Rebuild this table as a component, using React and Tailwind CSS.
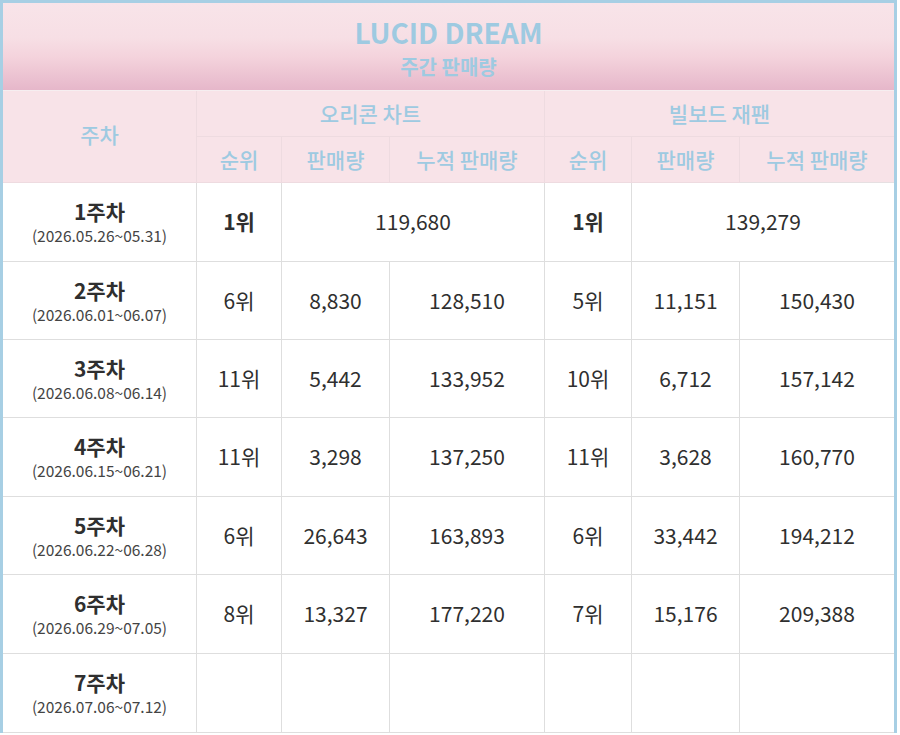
import React from "react";

const font = { fontFamily: '"Noto Sans CJK KR", "Noto Sans", sans-serif' };

const rows = [
  { w: "1주차", d: "(2026.05.26~05.31)", merged: true, o: ["1위", "119,680"], b: ["1위", "139,279"] },
  { w: "2주차", d: "(2026.06.01~06.07)", o: ["6위", "8,830", "128,510"], b: ["5위", "11,151", "150,430"] },
  { w: "3주차", d: "(2026.06.08~06.14)", o: ["11위", "5,442", "133,952"], b: ["10위", "6,712", "157,142"] },
  { w: "4주차", d: "(2026.06.15~06.21)", o: ["11위", "3,298", "137,250"], b: ["11위", "3,628", "160,770"] },
  { w: "5주차", d: "(2026.06.22~06.28)", o: ["6위", "26,643", "163,893"], b: ["6위", "33,442", "194,212"] },
  { w: "6주차", d: "(2026.06.29~07.05)", o: ["8위", "13,327", "177,220"], b: ["7위", "15,176", "209,388"] },
  { w: "7주차", d: "(2026.07.06~07.12)", o: ["", "", ""], b: ["", "", ""] },
];

const H = "flex items-center justify-center bg-[#f8e3e8] text-[#9ecae1] text-[21px] font-medium border-[#eedbe0]";
const D = "flex items-center justify-center bg-white text-[#2f2f2f] text-[21px] border-[#dedede]";

export default function App() {
  return (
    <div style={font} className="w-[900px] h-[735px] overflow-hidden bg-white">
      <div className="w-[897px] border-[3px] border-b-0 border-[#a7cfe4]">
        <div className="h-[87px] flex flex-col items-center pt-[12px] bg-[linear-gradient(to_bottom,#f8e4e9_0%,#f7dfe5_40%,#f4d3dc_62%,#e6b7ca_100%)]">
          <div className="text-[28px] font-bold leading-[34px] text-[#9ecae1]">LUCID DREAM</div>
          <div className="text-[20px] font-bold leading-[26px] text-[#9ecae1] mt-[5px]">주간 판매량</div>
        </div>
        <div className="h-px bg-[#f6eef0]" />
        <div className="grid grid-cols-[194px_85px_108px_155px_87px_108px_154px] grid-rows-[46px_46px_79px_78px_78px_79px_78px_79px_79px]">
          <div className={`${H} row-span-2 border-r border-b pb-[3px]`}>주차</div>
          <div className={`${H} col-span-3 border-r border-b`}>오리콘 차트</div>
          <div className={`${H} col-span-3 border-b`}>빌보드 재팬</div>
          <div className={`${H} border-r border-b`}>순위</div>
          <div className={`${H} border-r border-b`}>판매량</div>
          <div className={`${H} border-r border-b`}>누적 판매량</div>
          <div className={`${H} border-r border-b`}>순위</div>
          <div className={`${H} border-r border-b`}>판매량</div>
          <div className={`${H} border-b border-b-[#e6e0e2]`}>누적 판매량</div>
          {rows.map((r, i) => (
            <React.Fragment key={i}>
              <div className={`${D} flex-col border-r border-b`}>
                <div className="font-bold leading-[26px]">{r.w}</div>
                <div className="text-[15.5px] leading-[22px] text-[#444]">{r.d}</div>
              </div>
              {r.merged ? (
                <>
                  <div className={`${D} border-r border-b font-bold`}>{r.o[0]}</div>
                  <div className={`${D} col-span-2 border-r border-b`}>{r.o[1]}</div>
                  <div className={`${D} border-r border-b font-bold`}>{r.b[0]}</div>
                  <div className={`${D} col-span-2 border-b`}>{r.b[1]}</div>
                </>
              ) : (
                <>
                  <div className={`${D} border-r border-b`}>{r.o[0]}</div>
                  <div className={`${D} border-r border-b`}>{r.o[1]}</div>
                  <div className={`${D} border-r border-b`}>{r.o[2]}</div>
                  <div className={`${D} border-r border-b`}>{r.b[0]}</div>
                  <div className={`${D} border-r border-b`}>{r.b[1]}</div>
                  <div className={`${D} border-b`}>{r.b[2]}</div>
                </>
              )}
            </React.Fragment>
          ))}
        </div>
      </div>
    </div>
  );
}
